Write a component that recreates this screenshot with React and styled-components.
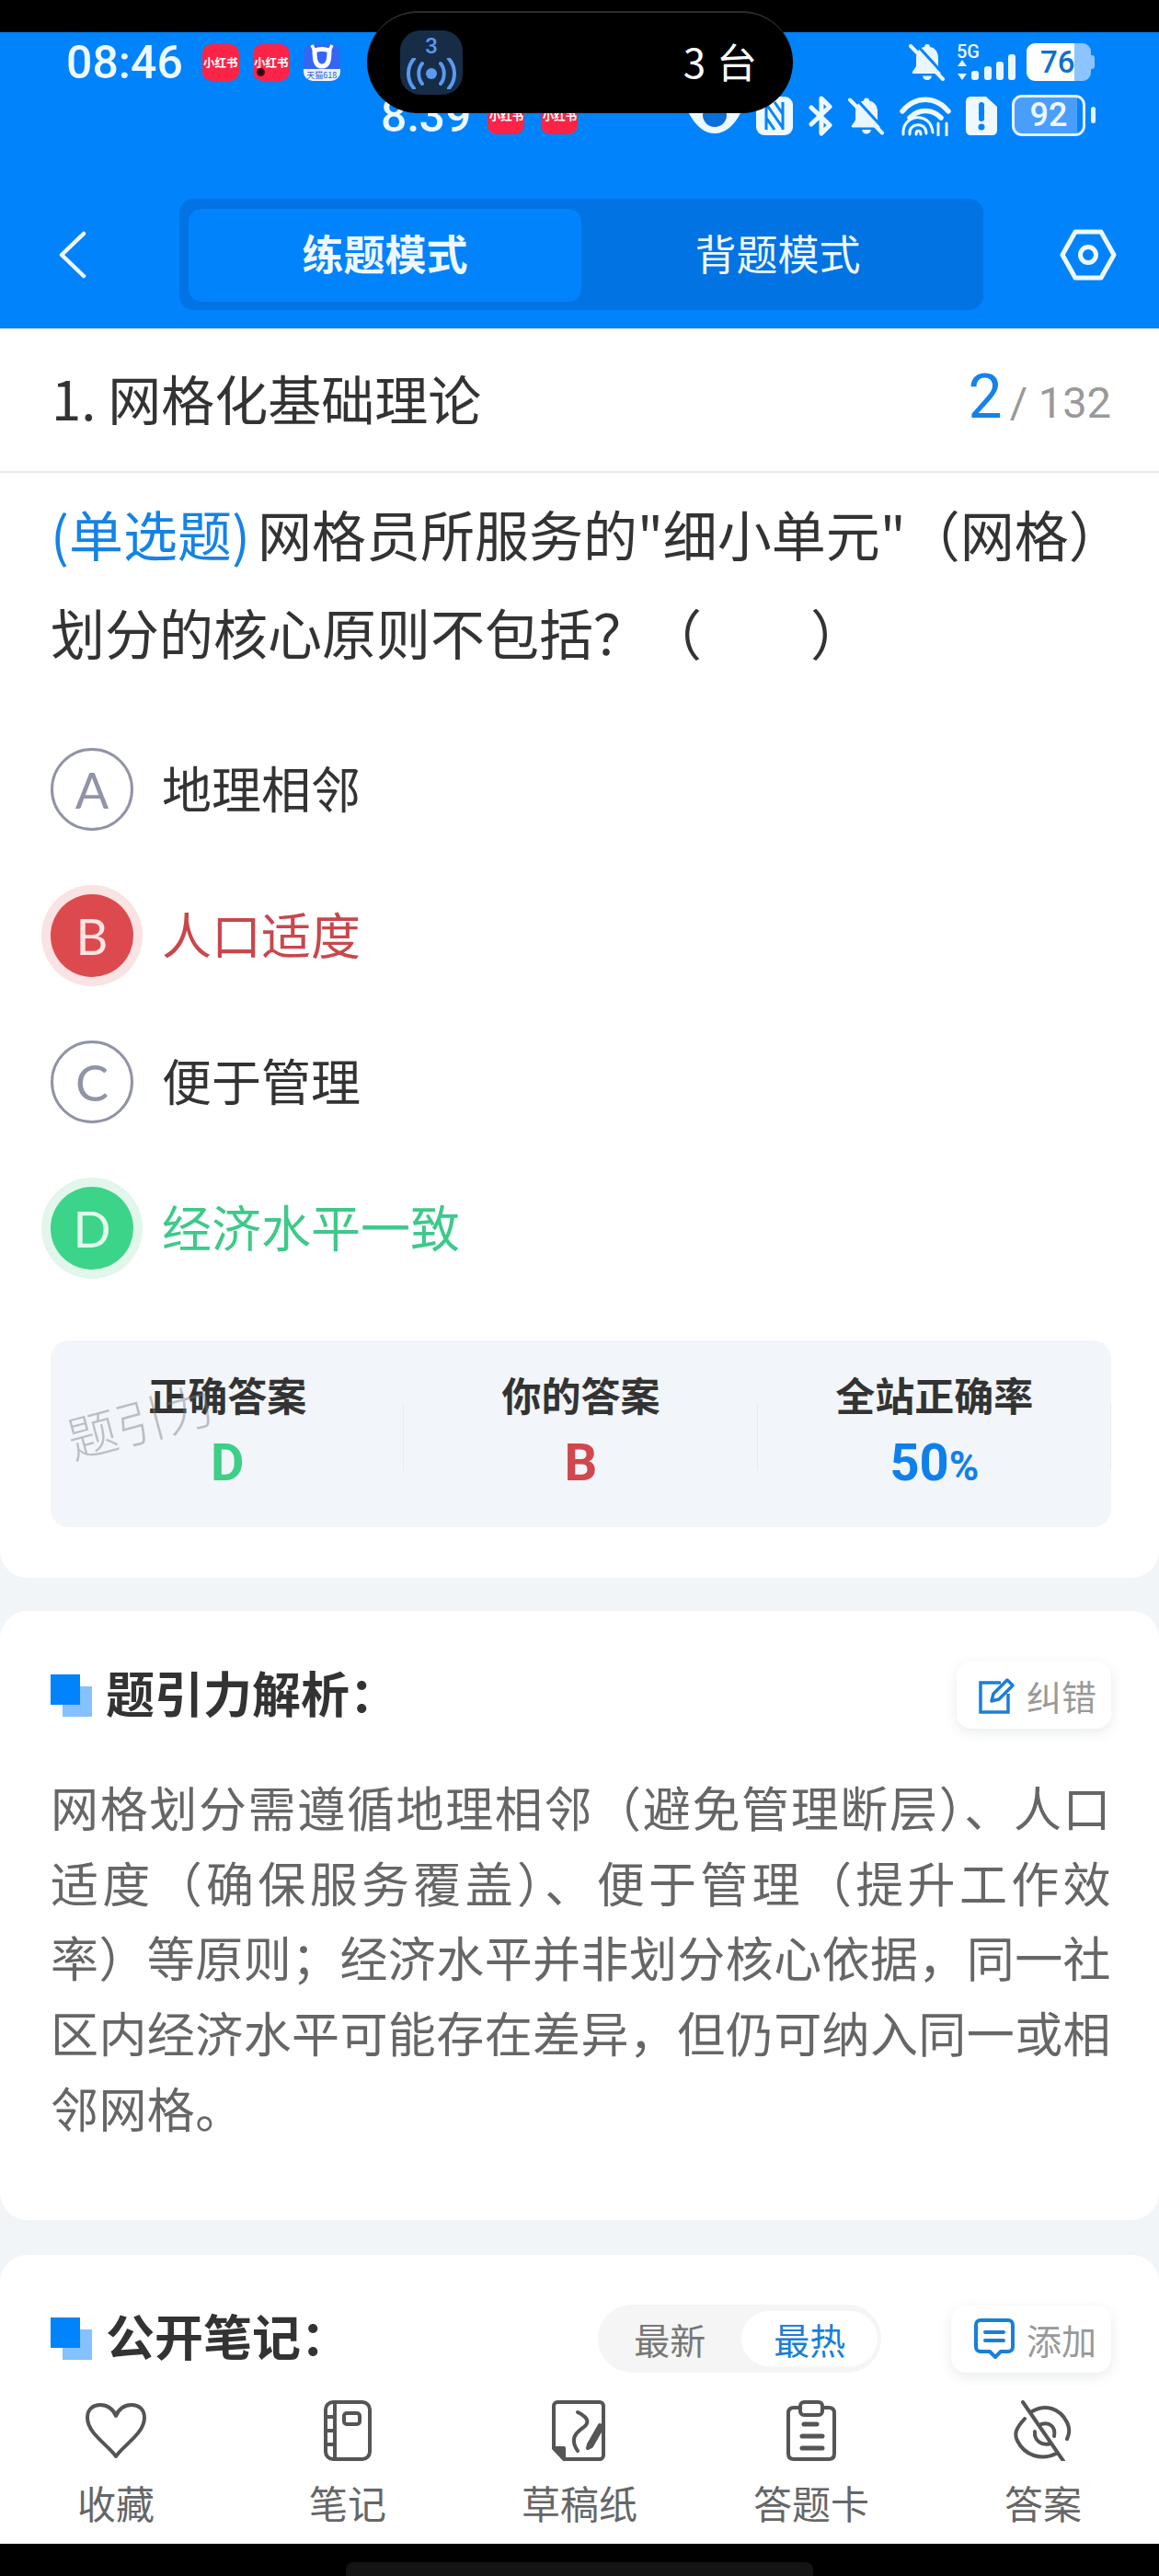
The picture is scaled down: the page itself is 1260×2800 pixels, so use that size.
import React from 'react';
import styled, { createGlobalStyle } from 'styled-components';

const CJK = `"Noto Sans CJK SC", "Noto Sans", sans-serif`;

const GlobalStyle = createGlobalStyle`
  html, body {
    margin: 0;
    padding: 0;
    background: #000;
  }
  #root {
    width: 1260px;
  }
`;

const Screen = styled.div`
  position: relative;
  width: 1260px;
  height: 2800px;
  background: #000;
  overflow: hidden;
  display: flex;
  flex-direction: column;
  font-family: ${CJK};
`;

const TopGap = styled.div`
  height: 35px;
  flex: none;
`;

const Header = styled.header`
  flex: none;
  height: 322px;
  box-sizing: border-box;
  background: #0183fb;
  padding-top: 12px;
  display: flex;
  flex-direction: column;
`;

const StatusRow = styled.div`
  height: ${({ $height }) => $height}px;
  margin-top: ${({ $top }) => $top || 0}px;
  padding: 0 70px 0 ${({ $left }) => $left}px;
  display: flex;
  align-items: center;
  justify-content: space-between;
`;

const StatusGroup = styled.div`
  display: flex;
  align-items: center;
  gap: ${({ $gap }) => $gap}px;
`;

const Clock = styled.span`
  font-family: Roboto, sans-serif;
  font-size: 50px;
  font-weight: 500;
  line-height: 41px;
  color: #eef8ff;
  margin-top: 2px;
  margin-right: ${({ $mr }) => $mr}px;
`;

const AppIcon = styled.div`
  width: 40px;
  height: 40px;
  border-radius: 10px;
  background: #fb2447;
  color: #fff;
  font-size: 12.5px;
  font-weight: 700;
  white-space: nowrap;
  display: flex;
  align-items: center;
  justify-content: center;
  position: relative;
`;

const AppDot = styled.span`
  position: absolute;
  left: 4px;
  bottom: 5px;
  width: 9px;
  height: 9px;
  border-radius: 50%;
  background: #111;
  border: 2px solid #5a0614;
  box-sizing: border-box;
`;

const TmallIcon = styled.div`
  width: 40px;
  height: 40px;
  border-radius: 10px;
  overflow: hidden;
  background: #3366f5;
  display: flex;
  flex-direction: column;
  align-items: center;
`;

const TmallBand = styled.span`
  margin-top: auto;
  width: 100%;
  height: 13px;
  line-height: 13px;
  background: #eef3ff;
  color: #2a55d8;
  font-size: 9px;
  text-align: center;
  white-space: nowrap;
`;

const Island = styled.div`
  position: absolute;
  left: 399px;
  top: 12px;
  width: 463px;
  height: 111px;
  box-sizing: border-box;
  border-radius: 56px;
  background: #000;
  border-top: 2px solid #2c2c2c;
  padding: 19px 38px 0 36px;
  display: flex;
  justify-content: space-between;
  z-index: 5;
`;

const IslandBadge = styled.div`
  width: 68px;
  height: 70px;
  border-radius: 22px;
  background: #172c47;
  color: #5a9af0;
  font-family: Roboto, sans-serif;
  font-size: 24px;
  font-weight: 500;
  line-height: 26px;
  display: flex;
  flex-direction: column;
  align-items: center;
  padding-top: 4px;
  box-sizing: border-box;
`;

const IslandText = styled.span`
  color: #fff;
  font-size: 44px;
  line-height: 66px;
  letter-spacing: 1px;
`;

const SignalBlock = styled.div`
  position: relative;
  width: 64px;
  height: 41px;
  display: flex;
  align-items: flex-end;
  color: #eaf6ff;
`;

const FiveG = styled.span`
  position: absolute;
  left: 0;
  top: 0;
  font-family: Roboto, sans-serif;
  font-size: 20px;
  font-weight: 500;
  line-height: 18px;
`;

const Battery = styled.div`
  position: relative;
  width: 70px;
  height: 41px;
  border-radius: 9px;
  background: linear-gradient(to right, #fff 0 74%, #8cc4ff 74% 100%);
  color: #116fd0;
  font-family: Roboto, sans-serif;
  font-size: 33px;
  font-weight: 500;
  line-height: 42px;
  box-sizing: border-box;
  padding-left: 15px;
  margin-right: 4px;

  &::after {
    content: '';
    position: absolute;
    right: -4px;
    top: 13px;
    width: 4px;
    height: 15px;
    border-radius: 0 3px 3px 0;
    background: #8cc4ff;
  }
`;

const OutlineBattery = styled.div`
  width: 80px;
  height: 45px;
  box-sizing: border-box;
  border: 3px solid #e4f2ff;
  border-radius: 11px;
  background: linear-gradient(to right, #4a9efb 0 92%, transparent 92%);
  color: #eef8ff;
  font-family: Roboto, sans-serif;
  font-size: 36px;
  font-weight: 500;
  line-height: 39px;
  text-align: center;
  position: relative;
  margin-right: 10px;

  &::after {
    content: '';
    position: absolute;
    right: -14px;
    top: 10px;
    width: 5px;
    height: 18px;
    border-radius: 3px;
    background: #e4f2ff;
  }
`;

const NavRow = styled.div`
  margin-top: 68px;
  padding-left: 64px;
  display: flex;
  align-items: center;
`;

const Back = styled.svg`
  width: 30px;
  height: 52px;
  flex: none;
  margin-right: 101px;
`;

const Tabs = styled.div`
  width: 874px;
  height: 121px;
  box-sizing: border-box;
  padding: 11px 10px 9px;
  border-radius: 16px;
  background: #0173e3;
  display: grid;
  grid-template-columns: 427px 1fr;
`;

const Tab = styled.div`
  border-radius: 14px;
  background: ${({ $active }) => ($active ? '#0183fb' : 'transparent')};
  color: #eef8ff;
  font-size: 45px;
  font-weight: ${({ $active }) => ($active ? 700 : 400)};
  padding-bottom: 6px;
  box-sizing: border-box;
  display: flex;
  align-items: center;
  justify-content: center;
`;

const Gear = styled.svg`
  width: 62px;
  height: 56px;
  flex: none;
  margin-left: 83px;
`;

const Content = styled.main`
  flex: 1;
  min-height: 0;
  background: #f2f5f8;
  display: flex;
  flex-direction: column;
`;

const QuestionCard = styled.section`
  background: #fff;
  border-radius: 0 0 30px 30px;
  padding-bottom: 55px;
`;

const TitleBar = styled.div`
  height: 157px;
  box-sizing: border-box;
  border-bottom: 2px solid #e8e8e8;
  padding: 0 52px 6px 56px;
  display: flex;
  align-items: center;
  justify-content: space-between;
`;

const ChapterTitle = styled.h1`
  margin: 0;
  font-size: 58px;
  font-weight: 400;
  color: #333;
`;

const Progress = styled.div`
  display: flex;
  align-items: baseline;
  gap: 8px;
  font-family: Roboto, sans-serif;
  font-size: 47px;
  color: #999;
`;

const ProgressNow = styled.span`
  font-size: 66px;
  font-weight: 400;
  color: #1583e6;
`;

const Question = styled.p`
  margin: 12px 40px 0 55px;
  font-size: 59px;
  line-height: 107px;
  color: #333;
`;

const QuestionType = styled.span`
  color: #1583e6;
  margin-right: 8px;
`;

const Options = styled.div`
  margin: 73px 55px 0;
  display: flex;
  flex-direction: column;
  gap: 69px;
`;

const Option = styled.div`
  display: flex;
  align-items: center;
  gap: 31px;
  font-size: 54px;
  color: ${({ $state }) =>
    $state === 'wrong' ? '#c9474c' : $state === 'right' ? '#3ec98a' : '#333'};
`;

const OptionText = styled.span`
  margin-bottom: 6px;
`;

const Bullet = styled.span`
  width: 90px;
  height: 90px;
  box-sizing: border-box;
  flex: none;
  border-radius: 50%;
  font-family: Lato, sans-serif;
  font-size: 54px;
  font-weight: 400;
  display: flex;
  align-items: center;
  justify-content: center;
  ${({ $state }) =>
    $state === 'wrong'
      ? 'background: #dd4a4e; color: #fbe4e4; box-shadow: 0 0 0 10px #fae3e3;'
      : $state === 'right'
      ? 'background: #3bd488; color: #e2f9ee; box-shadow: 0 0 0 10px #e2f6ec;'
      : 'border: 3px solid #9194a6; color: #9194a6;'}
`;

const StatBox = styled.div`
  position: relative;
  margin: 77px 52px 0 55px;
  height: 203px;
  box-sizing: border-box;
  padding-top: 28px;
  border-radius: 20px;
  background: #f2f5f9;
  display: grid;
  grid-template-columns: repeat(3, 1fr);
`;

const Stat = styled.div`
  position: relative;
  display: flex;
  flex-direction: column;
  align-items: center;
  gap: 10px;

  &:not(:last-child)::after {
    content: '';
    position: absolute;
    right: 0;
    top: 41px;
    height: 72px;
    width: 1px;
    background: #e6e9ed;
  }
`;

const StatLabel = styled.span`
  font-size: 43px;
  line-height: 60px;
  font-weight: 700;
  color: #333;
`;

const StatValue = styled.span`
  font-family: Roboto, sans-serif;
  font-size: 56px;
  line-height: 70px;
  font-weight: 700;
  color: ${({ $color }) => $color};
`;

const StatUnit = styled.span`
  font-size: 44px;
`;

const Watermark = styled.span`
  position: absolute;
  left: 16px;
  top: 46px;
  font-size: 54px;
  font-weight: 300;
  color: rgba(120, 125, 130, 0.45);
  transform: rotate(-15deg);
  white-space: nowrap;
`;

const Card = styled.section`
  margin-top: ${({ $top }) => $top}px;
  background: #fff;
  border-radius: ${({ $flat }) => ($flat ? '30px 30px 0 0' : '30px')};
  padding: 55px 52px ${({ $bottom }) => $bottom}px 55px;
`;

const CardHead = styled.div`
  height: 73px;
  display: flex;
  align-items: center;
`;

const Marker = styled.span`
  position: relative;
  flex: none;
  width: 45px;
  height: 46px;
  margin-right: 15px;
  &::before {
    content: '';
    position: absolute;
    left: 13px;
    top: 13px;
    width: 32px;
    height: 33px;
    background: #85c0ff;
  }
  &::after {
    content: '';
    position: absolute;
    left: 0;
    top: 0;
    width: 32px;
    height: 33px;
    background: #0183fb;
  }
`;

const CardTitle = styled.h2`
  margin: 0;
  padding-bottom: 8px;
  font-size: 53px;
  font-weight: 700;
  color: #333;
`;

const PlainButton = styled.div`
  height: 73px;
  box-sizing: border-box;
  border-radius: 16px;
  background: #fff;
  box-shadow: 0 4px 14px rgba(40, 60, 90, 0.1);
  padding: 0 16px 0 ${({ $left }) => $left}px;
  display: flex;
  align-items: center;
  gap: 12px;
  font-size: 38px;
  color: #999;
  margin-left: ${({ $ml }) => $ml || 'auto'};
`;

const Analysis = styled.p`
  margin: 44px 0 0;
  font-size: 52px;
  letter-spacing: 0.4px;
  line-height: 81.7px;
  color: #666;
  text-align: justify;
`;

const SortSwitch = styled.div`
  margin-left: auto;
  width: 308px;
  height: 74px;
  box-sizing: border-box;
  padding: 7px 4px 7px 0;
  border-radius: 37px;
  background: #f5f5f5;
  display: flex;
  justify-content: flex-end;
  align-items: center;
`;

const SortItem = styled.span`
  width: ${({ $active }) => ($active ? 148 : 157)}px;
  height: 60px;
  border-radius: 30px;
  background: ${({ $active }) => ($active ? '#fff' : 'transparent')};
  color: ${({ $active }) => ($active ? '#1a7fd6' : '#777')};
  font-size: 39px;
  display: flex;
  align-items: center;
  justify-content: center;
`;

const BottomNav = styled.nav`
  flex: none;
  height: 170px;
  background: #fff;
  display: grid;
  grid-template-columns: repeat(5, 252px);
`;

const NavItem = styled.div`
  padding-top: 15px;
  display: flex;
  flex-direction: column;
  align-items: center;
  color: #666;
  font-size: 42px;
  line-height: 60px;
`;

const NavIcon = styled.svg`
  width: 72px;
  height: 66px;
  margin-bottom: 15px;
  fill: none;
  stroke: #555;
  stroke-width: 4;
  stroke-linejoin: round;
  stroke-linecap: round;
`;

const HomeArea = styled.div`
  flex: none;
  height: 35px;
  background: #000;
  display: flex;
  justify-content: center;
  align-items: flex-end;
`;

const HomeBar = styled.div`
  width: 508px;
  height: 15px;
  border-radius: 8px 8px 0 0;
  background: #141414;
`;

const BellOff = ({ width, height }) => (
  <svg width={width} height={height} viewBox="0 0 40 41" fill="#eaf6ff">
    <path d="M20 1c2 0 3 1 3 3 6 1 9 6 9 12v9l4 6c1 1 0 2-1 2H5c-1 0-2-1-1-2l4-6v-9c0-6 3-11 9-12 0-2 1-3 3-3z" />
    <path d="M15 35.500h10c-.5 3-2.500 4.500-5 4.500s-4.500-1.500-5-4.500z" />
    <path d="M7 0l33 36" stroke="#0183fb" strokeWidth="3" />
    <path d="M2 3l35 36" stroke="#eaf6ff" strokeWidth="4" strokeLinecap="round" />
  </svg>
);

const Signal = () => (
  <svg width="64" height="29" viewBox="0 0 64 29" fill="#eaf6ff">
    <path d="M6 6l5 7H1zM6 28l5-7H1z" />
    <rect x="16" y="18" width="8" height="10" rx="3" />
    <rect x="30" y="13" width="8" height="15" rx="3" />
    <rect x="43" y="8" width="8" height="20" rx="3" />
    <rect x="56" y="0" width="8" height="28" rx="3" />
  </svg>
);

const Eye = () => (
  <svg width="58" height="42" viewBox="0 0 58 42">
    <path d="M1 18C8 7 18 2 29 2s21 5 28 16c-7 14-17 22-28 22S8 32 1 18z" fill="#eef8ff" />
    <circle cx="29" cy="20" r="13" fill="#0a6fd8" />
  </svg>
);

const Nfc = () => (
  <svg width="40" height="42" viewBox="0 0 40 42">
    <rect width="40" height="42" rx="9" fill="#eef8ff" />
    <path d="M11 6v30M29 6v30M11 8l18 26M20 6l9 13M11 23l9 13" stroke="#0183fb" strokeWidth="3" fill="none" />
  </svg>
);

const Bluetooth = () => (
  <svg width="28" height="44" viewBox="0 0 28 44" fill="none" stroke="#eef8ff" strokeWidth="5" strokeLinejoin="round" strokeLinecap="round">
    <path d="M4 13l20 19-9 9V3l9 9L4 31" />
  </svg>
);

const Wifi = () => (
  <svg width="56" height="44" viewBox="0 0 56 44" fill="none" stroke="#eef8ff" strokeWidth="5.500" strokeLinecap="round">
    <path d="M3 17C17 0 39 0 53 17" />
    <path d="M11 24c10-10 24-10 34 0" />
    <path d="M4 42c-2-22 30-26 32-2M11 42c-2-12 18-15 18-1M18 42c0-5 5-5 5 0" strokeWidth="3" />
    <path d="M42 30v13M51 30v13" strokeWidth="3" />
  </svg>
);

const Sim = () => (
  <svg width="34" height="42" viewBox="0 0 34 42">
    <path d="M6 0h16l12 11v25c0 4-2 6-6 6H6c-4 0-6-2-6-6V6c0-4 2-6 6-6z" fill="#eef8ff" />
    <path d="M17 9v15" stroke="#0183fb" strokeWidth="6" strokeLinecap="round" />
    <circle cx="17" cy="33" r="3.500" fill="#0183fb" />
  </svg>
);

const EditIcon = () => (
  <svg width="40" height="40" viewBox="0 0 40 40" fill="none" stroke="#1a7fd6" strokeWidth="3.500">
    <path d="M24 6H2v32h30V18" />
    <path d="M14 26l2-8L31 3l6 6-15 15z" strokeLinejoin="round" />
  </svg>
);

const NoteIcon = () => (
  <svg width="46" height="46" viewBox="0 0 46 46" fill="none" stroke="#1a7fd6" strokeWidth="4">
    <path d="M8 3h30c3 0 5 2 5 5v24c0 3-2 5-5 5h-8l-6 6-6-6H8c-3 0-5-2-5-5V8c0-3 2-5 5-5z" strokeLinejoin="round" />
    <path d="M13 16h20M13 25h20" strokeLinecap="round" />
  </svg>
);

const navItems = [
  {
    label: '收藏',
    icon: <path d="M36 61C28 49 5 36 5 19 5 9 12 5 19 5c7 0 14 4 17 12 3-8 10-12 17-12 7 0 14 4 14 14 0 17-23 30-31 42z" />
  },
  {
    label: '笔记',
    icon: (
      <>
        <rect x="12" y="2" width="48" height="62" rx="8" />
        <path d="M22 2v62M12 18h10M12 33h10M12 48h10" />
        <rect x="32" y="14" width="17" height="12" rx="3" />
      </>
    )
  },
  {
    label: '草稿纸',
    icon: (
      <>
        <path d="M12 2h46c2 0 4 2 4 4v54c0 2-2 4-4 4H20L8 52V6c0-2 2-4 4-4z" />
        <path d="M8 52h11v12z" fill="#555" />
        <path d="M34 13c8 4 14 9 8 15-6 5-13 9-12 17 0 4 2 7 4 10" />
        <path d="M46 48l12-21 3 2-12 21-4 2z" />
      </>
    )
  },
  {
    label: '答题卡',
    icon: (
      <>
        <path d="M23 8h-6c-4 0-6 2-6 6v44c0 4 2 6 6 6h38c4 0 6-2 6-6V14c0-4-2-6-6-6h-6" />
        <rect x="24" y="2" width="24" height="14" rx="4" />
        <path d="M28 26h14M26 39h22M26 52h22" strokeWidth="5" />
      </>
    )
  },
  {
    label: '答案',
    icon: (
      <>
        <path d="M24 12c14-8 30-4 38 12 3 6 3 12 0 18M16 20C7 30 4 36 8 44c8 16 26 22 42 14" />
        <path d="M34 26c9-3 16 3 14 13M27 34c-1 10 8 16 17 13" />
        <path d="M14 2l44 64" />
      </>
    )
  }
];

const App = () => (
  <>
    <GlobalStyle />
    <Screen>
      <TopGap />
      <Island>
        <IslandBadge>
          3
          <svg width="56" height="34" viewBox="0 0 56 34" fill="none" stroke="#5a9af0" strokeWidth="4" strokeLinecap="round">
            <circle cx="28" cy="17" r="6" fill="#5a9af0" stroke="none" />
            <path d="M18 6c-5 6-5 16 0 22M38 6c5 6 5 16 0 22M9 1C1 10 1 24 9 33M47 1c8 9 8 23 0 32" />
          </svg>
        </IslandBadge>
        <IslandText>3 台</IslandText>
      </Island>

      <Header>
        <StatusRow $height={41} $left={72}>
          <StatusGroup $gap={15}>
            <Clock $mr={6}>08:46</Clock>
            <AppIcon>小红书</AppIcon>
            <AppIcon>
              小红书
              <AppDot />
            </AppIcon>
            <TmallIcon>
              <svg width="30" height="27" viewBox="0 0 30 27" fill="none" stroke="#fff" strokeWidth="5">
                <path d="M7 7c0 10 1 17 8 17s8-7 8-17c-5-2-11-2-16 0z" />
                <path d="M7 7L4 1M23 7l3-6" strokeWidth="3.500" />
              </svg>
              <TmallBand>天猫618</TmallBand>
            </TmallIcon>
          </StatusGroup>
          <StatusGroup $gap={12}>
            <BellOff width={40} height={41} />
            <SignalBlock>
              <FiveG>5G</FiveG>
              <Signal />
            </SignalBlock>
            <Battery>76</Battery>
          </StatusGroup>
        </StatusRow>

        <StatusRow $height={45} $top={15} $left={414}>
          <StatusGroup $gap={18}>
            <Clock $mr={0}>8:39</Clock>
            <AppIcon>小红书</AppIcon>
            <AppIcon>小红书</AppIcon>
          </StatusGroup>
          <StatusGroup $gap={16}>
            <Eye />
            <Nfc />
            <Bluetooth />
            <BellOff width={40} height={42} />
            <Wifi />
            <Sim />
            <OutlineBattery>92</OutlineBattery>
          </StatusGroup>
        </StatusRow>

        <NavRow>
          <Back viewBox="0 0 30 52" fill="none" stroke="#eef8ff" strokeWidth="4.500" strokeLinecap="round" strokeLinejoin="round">
            <path d="M27 3L3 26l24 23" />
          </Back>
          <Tabs>
            <Tab $active>练题模式</Tab>
            <Tab>背题模式</Tab>
          </Tabs>
          <Gear viewBox="0 0 62 56" fill="none" stroke="#eef8ff" strokeWidth="5" strokeLinejoin="round">
            <path d="M17 3h28l14 25-14 25H17L3 28z" />
            <circle cx="31" cy="28" r="8.500" />
          </Gear>
        </NavRow>
      </Header>

      <Content>
        <QuestionCard>
          <TitleBar>
            <ChapterTitle>1. 网格化基础理论</ChapterTitle>
            <Progress>
              <ProgressNow>2</ProgressNow>/ 132
            </Progress>
          </TitleBar>
          <Question>
            <QuestionType>(单选题)</QuestionType>网格员所服务的"细小单元"（网格）划分的核心原则不包括？（　　）
          </Question>
          <Options>
            <Option>
              <Bullet>A</Bullet>
              <OptionText>地理相邻</OptionText>
            </Option>
            <Option $state="wrong">
              <Bullet $state="wrong">B</Bullet>
              <OptionText>人口适度</OptionText>
            </Option>
            <Option>
              <Bullet>C</Bullet>
              <OptionText>便于管理</OptionText>
            </Option>
            <Option $state="right">
              <Bullet $state="right">D</Bullet>
              <OptionText>经济水平一致</OptionText>
            </Option>
          </Options>
          <StatBox>
            <Stat>
              <StatLabel>正确答案</StatLabel>
              <StatValue $color="#3ccf86">D</StatValue>
            </Stat>
            <Stat>
              <StatLabel>你的答案</StatLabel>
              <StatValue $color="#d0474c">B</StatValue>
            </Stat>
            <Stat>
              <StatLabel>全站正确率</StatLabel>
              <StatValue $color="#0f80ea">
                50<StatUnit>%</StatUnit>
              </StatValue>
            </Stat>
            <Watermark>题引力</Watermark>
          </StatBox>
        </QuestionCard>

        <Card $top={36} $bottom={81}>
          <CardHead>
            <Marker />
            <CardTitle>题引力解析：</CardTitle>
            <PlainButton $left={24}>
              <EditIcon />
              纠错
            </PlainButton>
          </CardHead>
          <Analysis>
            网格划分需遵循地理相邻（避免管理断层）、人口适度（确保服务覆盖）、便于管理（提升工作效率）等原则；经济水平并非划分核心依据，同一社区内经济水平可能存在差异，但仍可纳入同一或相邻网格。
          </Analysis>
        </Card>

        <Card $top={38} $bottom={15} $flat>
          <CardHead>
            <Marker />
            <CardTitle>公开笔记：</CardTitle>
            <SortSwitch>
              <SortItem>最新</SortItem>
              <SortItem $active>最热</SortItem>
            </SortSwitch>
            <PlainButton $left={24} $ml="76px">
              <NoteIcon />
              添加
            </PlainButton>
          </CardHead>
        </Card>

        <BottomNav>
          {navItems.map((item) => (
            <NavItem key={item.label}>
              <NavIcon viewBox="0 0 72 66">{item.icon}</NavIcon>
              {item.label}
            </NavItem>
          ))}
        </BottomNav>
      </Content>

      <HomeArea>
        <HomeBar />
      </HomeArea>
    </Screen>
  </>
);

export default App;
